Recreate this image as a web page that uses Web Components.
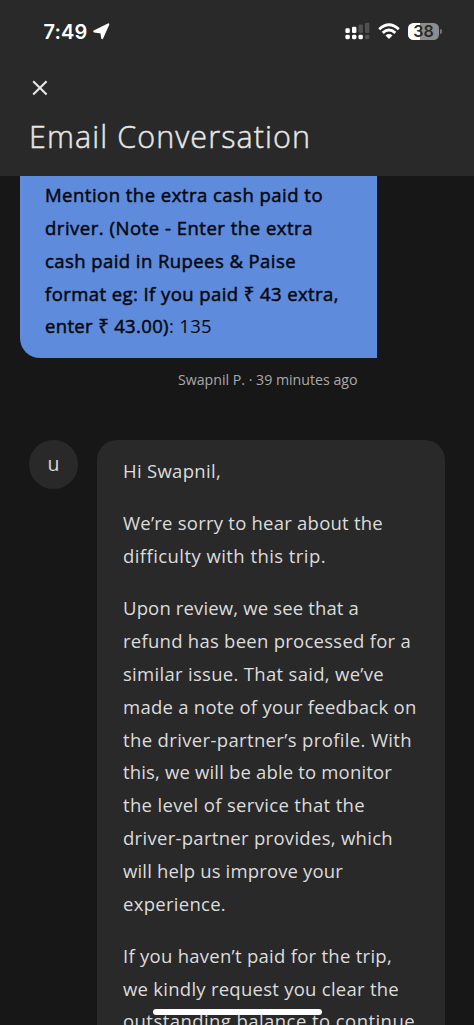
<!DOCTYPE html>
<html lang="en">
<head>
<meta charset="utf-8">
<title>Email Conversation</title>
<style>
html,body{margin:0;height:100%;overflow:hidden;background:#171717}
</style>
</head>
<body>
<conversation-screen></conversation-screen>
<script>
const define = (name, html, ready) => customElements.define(name, class extends HTMLElement {
  connectedCallback() {
    if (this.shadowRoot) return;
    const t = document.createElement('template');
    t.innerHTML = html;
    this.attachShadow({mode: 'open'}).append(t.content.cloneNode(true));
    if (ready) ready(this);
  }
});

// One line of copy, tracked so that it fills the measure given in "w".
define('text-line', `<style>
:host{display:block;white-space:nowrap}
span{display:inline-block}
</style><span><slot></slot></span>`, el => {
  const s = el.shadowRoot.querySelector('span');
  const n = el.textContent.length;
  s.style.letterSpacing = '0px';
  const diff = Number(el.getAttribute('w')) - s.getBoundingClientRect().width;
  s.style.letterSpacing = (diff / n).toFixed(4) + 'px';
});

define('status-bar', `<style>
:host{display:flex;height:62px;box-sizing:border-box;padding:0 32px 0 43.5px;align-items:center;justify-content:space-between;color:#fff}
div{display:flex;align-items:center}
text-line{font:600 20px/24px Inter,sans-serif;height:24px;padding-top:1px}
.loc{margin-left:5.5px}
.bat{position:relative;width:31px;height:17px;border-radius:5.5px;background:linear-gradient(90deg,#fff 38%,#8d8d8d 38%);justify-content:center;color:#292929;font:600 16px/17px Inter,sans-serif;margin-left:8px}
.cap{width:2px;height:5px;border-radius:0 2px 2px 0;background:#777;margin-left:1px}
</style>
<div><text-line w="44">7:49</text-line>
<svg class="loc" width="17" height="17" viewBox="0 0 17 17"><path d="M15.3 1.3 9.2 15.2 8.3 9.6 1.2 8.4Z" fill="#fff" stroke="#fff" stroke-width="2" stroke-linejoin="round"/></svg></div>
<div><svg width="25" height="18" viewBox="0 0 25 18"><g fill="#fff"><rect x=".4" y="6.2" width="4.4" height="4.8" rx="1.2"/><rect x="7" y="4.8" width="4.4" height="6.2" rx="1.2"/><rect x=".4" y="12.8" width="4.4" height="4.4" rx="1.4"/><rect x="7" y="12.8" width="4.4" height="4.4" rx="1.4"/><rect x="13.5" y="12.8" width="4.4" height="4.4" rx="1.4"/></g><g fill="#505050"><rect x="13.5" y="2.6" width="4.4" height="8.4" rx="1.2"/><rect x="20" y=".8" width="4.4" height="10.2" rx="1.2"/><rect x="20" y="12.8" width="4.4" height="4.4" rx="1.4"/></g></svg>
<svg style="margin-left:8px" width="22" height="17" viewBox="0 0 22 17"><g fill="none" stroke="#fff" stroke-width="2.8"><path d="M1.2 6.2Q11-2.8 20.8 6.2"/><path d="M4.7 9.9Q11 4.2 17.3 9.9"/></g><path d="M7.5 12.5Q11 9.6 14.5 12.5L11 16Z" fill="#fff"/></svg>
<div class="bat">38</div><i class="cap"></i></div>`);

define('page-header', `<style>
:host{display:flex;flex-direction:column;height:176px;flex:none;background:#292929;color:#e7e7e7}
svg{display:block;margin:18px 0 0 32px;flex:none}
text-line{margin:18.5px 0 0 29px;font:300 30.5px/42px "Open Sans","Noto Sans",sans-serif;-webkit-text-stroke:.45px #e7e7e7}
</style><status-bar></status-bar>
<svg width="16" height="16" viewBox="0 0 16 16"><path d="M1.2 1.2 14.6 14.6M14.6 1.2 1.2 14.6" stroke="#e7e7e7" stroke-width="2.1"/></svg>
<text-line w="282">Email Conversation</text-line>`);

define('sent-message', `<style>
:host{display:block;flex:none;width:377px}
.b{margin-left:19.5px;height:181.5px;box-sizing:border-box;padding:3.2px 0 0 25.5px;background:#5e8bdb;border-radius:0 0 0 20px;color:#06080f;font:400 18.5px/32.8px "Open Sans","Noto Sans",sans-serif;-webkit-text-stroke:.5px #06080f}
.m{display:flex;justify-content:flex-end;margin:12px 19.5px 0 0;color:#a9a9a9;font:400 14.2px/20px "Open Sans","Noto Sans",sans-serif}
</style><div class="b"><slot></slot></div><div class="m"><slot name="meta"></slot></div>`);

define('received-message', `<style>
:host{display:flex;flex:none;margin:50.5px 29.5px 0 29px;align-items:flex-start;justify-content:space-between}
.a{display:flex;justify-content:center;width:49px;height:49px;border-radius:50%;background:#292929;color:#dadada;font:400 19.5px/47px "Open Sans","Noto Sans",sans-serif}
.c{width:347.5px;box-sizing:border-box;padding:15.2px 0 0 26px;height:640px;border-radius:20px 20px 0 0;background:#292929;color:#dcdcdc;font:400 18.5px/32.8px "Open Sans","Noto Sans",sans-serif}
</style><div class="a"><slot name="avatar"></slot></div><div class="c"><slot></slot></div>`);

define('text-block', `<style>:host{display:block;margin-bottom:19.4px}</style><slot></slot>`);

define('conversation-screen', `<style>
:host{display:flex;flex-direction:column;position:relative;width:474px;height:1025px;overflow:hidden;background:#171717}
.home{position:absolute;left:153px;top:1009px;width:169px;height:6px;border-radius:3px;background:#fff}
.thin{-webkit-text-stroke:0}
</style>
<page-header></page-header>
<sent-message>
<text-line w="278">Mention the extra cash paid to</text-line>
<text-line w="268">driver. (Note - Enter the extra</text-line>
<text-line w="251">cash paid in Rupees &amp; Paise</text-line>
<text-line w="294">format eg: If you paid ₹ 43 extra,</text-line>
<text-line w="167">enter ₹ 43.00)<span class="thin">: 135</span></text-line>
<text-line slot="meta" w="179.5">Swapnil P. · 39 minutes ago</text-line>
</sent-message>
<received-message><span slot="avatar">u</span>
<text-block><text-line w="98">Hi Swapnil,</text-line></text-block>
<text-block><text-line w="260">We’re sorry to hear about the</text-line>
<text-line w="203">difficulty with this trip.</text-line></text-block>
<text-block><text-line w="236">Upon review, we see that a</text-line>
<text-line w="288">refund has been processed for a</text-line>
<text-line w="261">similar issue. That said, we’ve</text-line>
<text-line w="293.5">made a note of your feedback on</text-line>
<text-line w="289">the driver-partner’s profile. With</text-line>
<text-line w="269">this, we will be able to monitor</text-line>
<text-line w="242">the level of service that the</text-line>
<text-line w="270">driver-partner provides, which</text-line>
<text-line w="220">will help us improve your</text-line>
<text-line w="103">experience.</text-line></text-block>
<text-block><text-line w="269">If you haven’t paid for the trip,</text-line>
<text-line w="276">we kindly request you clear the</text-line>
<text-line w="292">outstanding balance to continue</text-line></text-block>
</received-message>
<div class="home"></div>`);
</script>
</body>
</html>
